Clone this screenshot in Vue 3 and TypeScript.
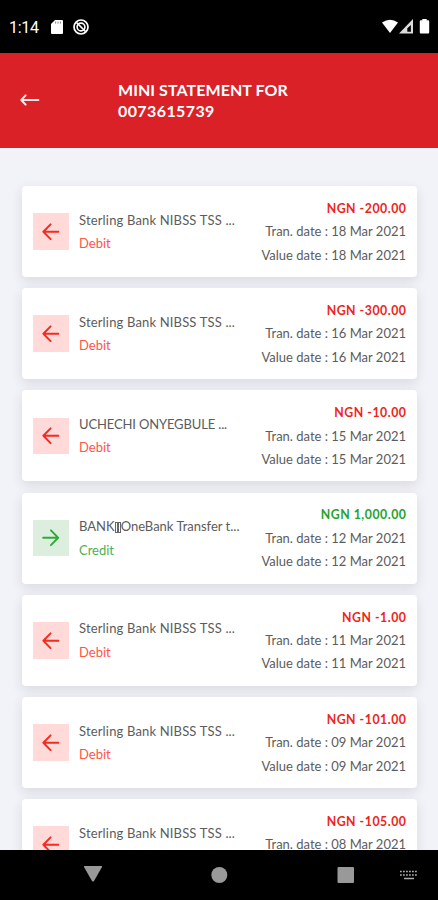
<script setup lang="ts">
interface Transaction {
  title: string
  rest?: string
  amount: string
  date: string
  credit?: boolean
  size: string
}

const transactions: Transaction[] = [
  { title: 'Sterling Bank NIBSS TSS ...', amount: '-200.00', date: '18 Mar 2021', size: 'bank' },
  { title: 'Sterling Bank NIBSS TSS ...', amount: '-300.00', date: '16 Mar 2021', size: 'bank' },
  { title: 'UCHECHI ONYEGBULE ...', amount: '-10.00', date: '15 Mar 2021', size: 'caps' },
  { title: 'BANK', rest: 'OneBank Transfer t...', amount: '1,000.00', date: '12 Mar 2021', credit: true, size: 'transfer' },
  { title: 'Sterling Bank NIBSS TSS ...', amount: '-1.00', date: '11 Mar 2021', size: 'bank' },
  { title: 'Sterling Bank NIBSS TSS ...', amount: '-101.00', date: '09 Mar 2021', size: 'bank' },
  { title: 'Sterling Bank NIBSS TSS ...', amount: '-105.00', date: '08 Mar 2021', size: 'bank' },
]
</script>

<template>
  <div class="phone">
    <div class="status">
      <span class="clock">1:14</span>
      <svg class="sd" viewBox="0 0 12 14"><path d="M4 0h7q1 0 1 1v12q0 1-1 1H1q-1 0-1-1V4z" fill="#fff" /><path d="M4.6 1.6v2M7 1.6v2M9.4 1.6v2" stroke="#777" stroke-width=".9" /></svg>
      <svg class="dnd" viewBox="0 0 16 16" fill="none" stroke="#fff"><circle cx="8" cy="8" r="7" stroke-width="1.7" /><circle cx="8" cy="8" r="3.9" stroke-width="1.6" /><path d="M3.5 3.5l9 9" stroke-width="1.7" /></svg>
      <span class="spacer"></span>
      <svg class="signals" viewBox="0 0 49 16">
        <path d="M0 3.5Q8 -2.2 16 3.5L8 14z" fill="#fff" />
        <path d="M31 0v14.5H17z" fill="#ddd" /><path d="M28.9 6v6.8h-3.6V9.3z" fill="#000" />
        <path d="M40.3 1.2V0h4.4v1.2h1.5q1 0 1 1V13.5q0 1-1 1h-7.4q-1 0-1-1V2.2q0-1 1-1z" fill="#fff" />
      </svg>
    </div>
    <header class="header">
      <svg class="back" viewBox="0 0 20 12" fill="none" stroke="#ffe9e9" stroke-width="2" stroke-linecap="round" stroke-linejoin="round"><path d="M18.4 6H1.2M5.6 1.4L1.2 6l4.4 4.6" /></svg>
      <h1><span class="line-a">MINI STATEMENT FOR</span><br /><span class="line-b">0073615739</span></h1>
    </header>
    <main class="list">
      <article v-for="t in transactions" :key="t.date" class="card" :class="{ credit: t.credit }">
        <div class="tile">
          <svg viewBox="0 0 18 18" fill="none" stroke="currentColor" stroke-width="2" stroke-linecap="round" stroke-linejoin="round"><path d="M16.8 9H1.4M8.8 1.4L1.4 9l7.4 7.6" /></svg>
        </div>
        <div class="info">
          <div class="title" :class="t.size">{{ t.title }}<template v-if="t.rest"><i class="box"></i><i class="box"></i>{{ t.rest }}</template></div>
          <div class="kind">{{ t.credit ? 'Credit' : 'Debit' }}</div>
        </div>
        <div class="details">
          <div class="amount">NGN {{ t.amount }}</div>
          <div class="tran">Tran. date : {{ t.date }}</div>
          <div class="value">Value date : {{ t.date }}</div>
        </div>
      </article>
    </main>
    <nav class="nav">
      <svg viewBox="0 0 438 50" fill="#999">
        <path d="M84.5 16h17q1 0 .5 1l-8 14q-1 1-2 0l-8-14q-.5-1 .5-1z" />
        <circle cx="219.3" cy="25" r="8" />
        <rect x="337.5" y="17" width="16.5" height="16" rx="1" />
        <path d="M400 21.5h17M400 25h17" stroke="#aaa" stroke-width="1.5" stroke-dasharray="1.8 1.2" />
        <path d="M404 28.5h10" stroke="#aaa" stroke-width="1.5" />
      </svg>
    </nav>
  </div>
</template>

<style>
body {
  margin: 0;
  overflow: hidden;
}
</style>

<style scoped>
.phone {
  width: 438px;
  height: 900px;
  display: flex;
  flex-direction: column;
  overflow: hidden;
  background: #f2f3f8;
  font-family: Lato, 'Open Sans', sans-serif;
}
.status {
  flex: 0 0 52.5px;
  box-sizing: border-box;
  display: flex;
  align-items: center;
  padding: 2px 7px 0 9px;
  background: #000;
}
.clock {
  width: 42px;
  color: #fff;
  font: 400 16px Roboto, sans-serif;
  letter-spacing: -0.3px;
}
.sd {
  width: 12px;
  height: 14px;
}
.dnd {
  width: 16px;
  height: 16px;
  margin-left: 10px;
}
.spacer {
  flex: 1;
}
.signals {
  width: 49px;
  height: 16px;
}
.header {
  flex: 0 0 95.5px;
  box-sizing: border-box;
  display: flex;
  align-items: center;
  padding-left: 19.5px;
  background: #da2128;
}
.back {
  width: 20px;
  height: 12px;
}
h1 {
  margin: 0 0 0 78.5px;
  color: #fff;
  font-size: 16px;
  font-weight: 700;
  line-height: 21.5px;
  white-space: nowrap;
}
.line-a {
  letter-spacing: 0.06px;
}
.line-b {
  letter-spacing: 0.4px;
}
.list {
  flex: 1;
  min-height: 0;
  overflow: hidden;
  display: flex;
  flex-direction: column;
  gap: 11.2px;
  padding: 38px 21px 0 22px;
}
.card {
  flex: 0 0 91px;
  box-sizing: border-box;
  display: flex;
  align-items: center;
  padding: 0 11px 0 10.5px;
  border-radius: 4px;
  background: #fff;
  box-shadow: 0 4px 12px rgba(40, 45, 60, 0.12);
  color: #5c5c5c;
  font-size: 13px;
  line-height: 23.4px;
  white-space: nowrap;
}
.tile {
  width: 36.5px;
  height: 36.5px;
  display: grid;
  place-items: center;
  background: #ffdad8;
  color: #f32b20;
}
.tile svg {
  width: 17.5px;
  height: 17.5px;
}
.info {
  padding-top: 1px;
  margin-left: 10px;
}
.bank {
  letter-spacing: 0.16px;
}
.caps {
  letter-spacing: -0.14px;
}
.kind {
  color: #ff5548;
}
.details {
  margin-left: auto;
  padding-top: 1px;
  text-align: right;
}
.amount {
  margin-right: -0.5px;
  color: #ef2419;
  font-size: 12.3px;
  font-weight: 700;
  letter-spacing: 0.53px;
}
.credit .tile {
  background: #dceedd;
  color: #32aa3b;
}
.credit .tile svg {
  transform: scaleX(-1);
}
.credit .kind {
  color: #4cb052;
}
.credit .amount {
  color: #25a22d;
}
.box {
  display: inline-block;
  box-sizing: border-box;
  width: 3px;
  height: 11px;
  border: 1px solid #666;
  vertical-align: -2px;
}
.nav {
  flex: 0 0 50.5px;
  background: #000;
}
.nav svg {
  display: block;
  width: 438px;
  height: 50px;
}
</style>
